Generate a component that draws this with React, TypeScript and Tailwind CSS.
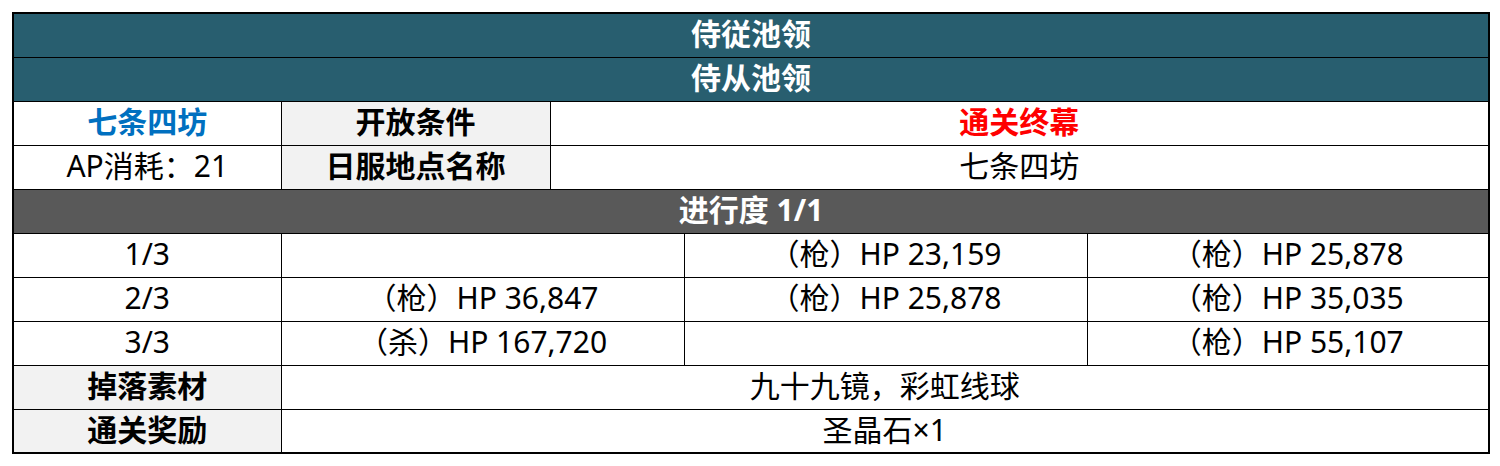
import React from "react";

const td = "border border-black text-center align-middle p-0 pb-[2px]";

export default function App() {
  const font = { fontFamily: '"Noto Sans", "Noto Sans CJK SC", sans-serif' };
  return (
    <div className="w-[1500px] h-[466px] bg-white pt-[12px] pl-[12px]" style={font}>
      <table className="table-fixed border-collapse border-2 border-black text-[30px] leading-none text-black w-[1476px]">
        <colgroup>
          <col className="w-[268px]" />
          <col className="w-[269px]" />
          <col className="w-[134px]" />
          <col className="w-[403px]" />
          <col className="w-[402px]" />
        </colgroup>
        <tbody>
          <tr className="h-[44px]">
            <td colSpan={5} className={`${td} bg-[#285e6f] text-white font-bold`}>侍従池领</td>
          </tr>
          <tr className="h-[44px]">
            <td colSpan={5} className={`${td} bg-[#285e6f] text-white font-bold`}>侍从池领</td>
          </tr>
          <tr className="h-[44px]">
            <td className={`${td} text-[#0070c0] font-bold`}>七条四坊</td>
            <td className={`${td} bg-[#f2f2f2] font-bold`}>开放条件</td>
            <td colSpan={3} className={`${td} text-[#ff0000] font-bold`}>通关终幕</td>
          </tr>
          <tr className="h-[44px]">
            <td className={td}>AP消耗：21</td>
            <td className={`${td} bg-[#f2f2f2] font-bold`}>日服地点名称</td>
            <td colSpan={3} className={td}>七条四坊</td>
          </tr>
          <tr className="h-[44px]">
            <td colSpan={5} className={`${td} bg-[#595959] text-white font-bold`}>进行度 1/1</td>
          </tr>
          <tr className="h-[44px]">
            <td className={td}>1/3</td>
            <td colSpan={2} className={td}></td>
            <td className={td}>（枪）HP 23,159</td>
            <td className={td}>（枪）HP 25,878</td>
          </tr>
          <tr className="h-[44px]">
            <td className={td}>2/3</td>
            <td colSpan={2} className={td}>（枪）HP 36,847</td>
            <td className={td}>（枪）HP 25,878</td>
            <td className={td}>（枪）HP 35,035</td>
          </tr>
          <tr className="h-[44px]">
            <td className={td}>3/3</td>
            <td colSpan={2} className={td}>（杀）HP 167,720</td>
            <td className={td}></td>
            <td className={td}>（枪）HP 55,107</td>
          </tr>
          <tr className="h-[44px]">
            <td className={`${td} bg-[#f2f2f2] font-bold`}>掉落素材</td>
            <td colSpan={4} className={td}>九十九镜，彩虹线球</td>
          </tr>
          <tr className="h-[44px]">
            <td className={`${td} bg-[#f2f2f2] font-bold`}>通关奖励</td>
            <td colSpan={4} className={td}>圣晶石×1</td>
          </tr>
        </tbody>
      </table>
    </div>
  );
}
